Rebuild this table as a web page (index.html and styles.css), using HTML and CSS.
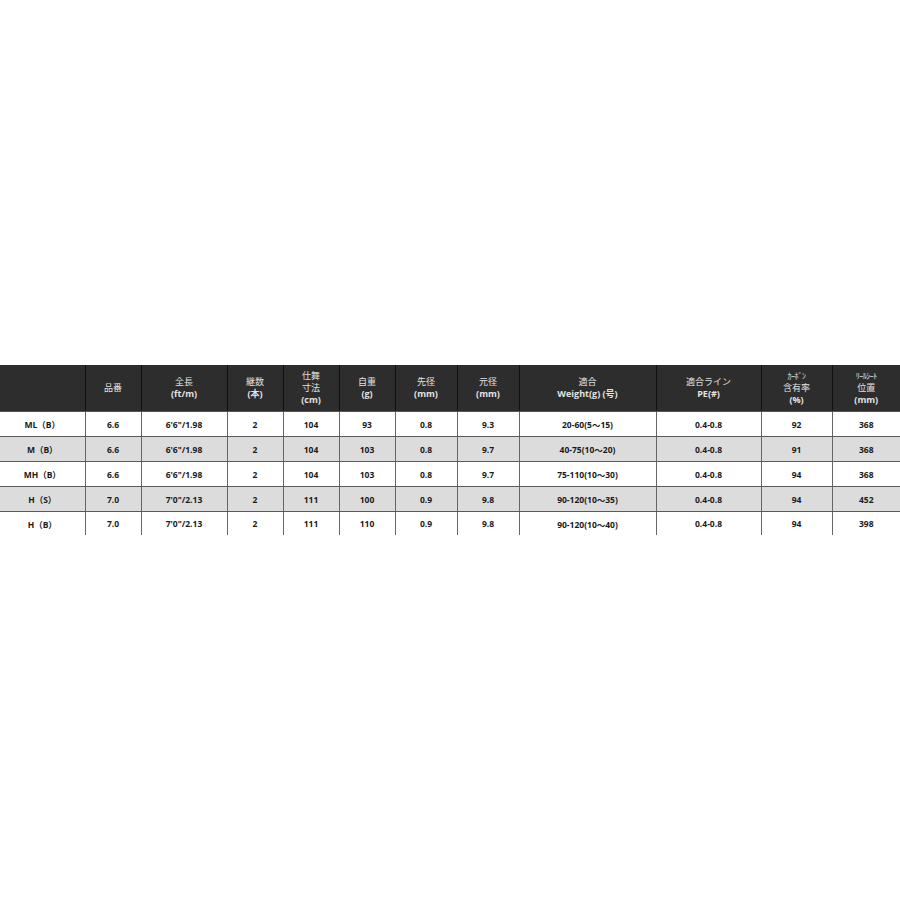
FILE: index.html
```html
<!DOCTYPE html>
<html lang="ja">
<head>
<meta charset="utf-8">
<link rel="stylesheet" href="styles.css">
</head>
<body>
<div class="page">
<table class="spec">
<colgroup>
<col class="c1"><col class="c2"><col class="c3"><col class="c4"><col class="c5"><col class="c6"><col class="c7"><col class="c8"><col class="c9"><col class="c10"><col class="c11"><col class="c12">
</colgroup>
<thead>
<tr>
<th></th>
<th>品番</th>
<th>全長<br><b>(ft/m)</b></th>
<th>継数<br><b>(本)</b></th>
<th>仕舞<br>寸法<br><b>(cm)</b></th>
<th>自重<br><b>(g)</b></th>
<th>先径<br><b>(mm)</b></th>
<th>元径<br><b>(mm)</b></th>
<th>適合<br><b>Weight(g) (号)</b></th>
<th>適合ライン<br><b>PE(#)</b></th>
<th><span class="tiny">ｶｰﾎﾞﾝ</span><br>含有率<br><b>(%)</b></th>
<th><span class="tiny">ﾘｰﾙｼｰﾄ</span><br>位置<br><b>(mm)</b></th>
</tr>
</thead>
<tbody>
<tr><td>ML（B）</td><td>6.6</td><td>6'6"/1.98</td><td>2</td><td>104</td><td>93</td><td>0.8</td><td>9.3</td><td>20-60(5～15)</td><td>0.4-0.8</td><td>92</td><td>368</td></tr>
<tr class="alt"><td>M（B）</td><td>6.6</td><td>6'6"/1.98</td><td>2</td><td>104</td><td>103</td><td>0.8</td><td>9.7</td><td>40-75(10～20)</td><td>0.4-0.8</td><td>91</td><td>368</td></tr>
<tr><td>MH（B）</td><td>6.6</td><td>6'6"/1.98</td><td>2</td><td>104</td><td>103</td><td>0.8</td><td>9.7</td><td>75-110(10～30)</td><td>0.4-0.8</td><td>94</td><td>368</td></tr>
<tr class="alt"><td>H（S）</td><td>7.0</td><td>7'0"/2.13</td><td>2</td><td>111</td><td>100</td><td>0.9</td><td>9.8</td><td>90-120(10～35)</td><td>0.4-0.8</td><td>94</td><td>452</td></tr>
<tr class="last"><td>H（B）</td><td>7.0</td><td>7'0"/2.13</td><td>2</td><td>111</td><td>110</td><td>0.9</td><td>9.8</td><td>90-120(10～40)</td><td>0.4-0.8</td><td>94</td><td>398</td></tr>
</tbody>
</table>
</div>
</body>
</html>
```

FILE: styles.css
```css
html, body {
  margin: 0;
  padding: 0;
  background: #ffffff;
}
.page {
  width: 900px;
  height: 900px;
  display: flex;
  align-items: flex-start;
  padding-top: 365px;
  box-sizing: border-box;
}
.spec {
  width: 900px;
  table-layout: fixed;
  border-collapse: collapse;
  font-family: "Open Sans", "Noto Sans CJK JP", sans-serif;
  text-align: center;
}
.c1 { width: 85px; }
.c2 { width: 56px; }
.c3 { width: 86px; }
.c4 { width: 56px; }
.c5 { width: 56px; }
.c6 { width: 56px; }
.c7 { width: 62px; }
.c8 { width: 62px; }
.c9 { width: 137px; }
.c10 { width: 105px; }
.c11 { width: 71px; }
.c12 { width: 68px; }
.spec th {
  background: #2d2d2d;
  color: #e2e2e2;
  font-weight: 400;
  font-size: 9px;
  line-height: 12px;
  height: 46px;
  padding: 0;
  border-left: 1px solid #111;
  border-bottom: 1px solid #555;
  vertical-align: middle;
}
.spec th b {
  font-weight: 700;
}
.spec th .tiny {
  font-size: 8px;
  letter-spacing: -0.5px;
}
.spec th:first-child,
.spec td:first-child {
  border-left: none;
}
.spec td {
  height: 24px;
  padding: 0;
  font-size: 8.5px;
  font-weight: 700;
  color: #1a1a1a;
  border-left: 1px solid #666;
  border-bottom: 1px solid #5a5a5a;
  vertical-align: middle;
  background: #ffffff;
}
.spec tr.alt td {
  background: #dcdcdc;
}
.spec tr.last td {
  height: 23px;
  border-bottom: none;
}
```
